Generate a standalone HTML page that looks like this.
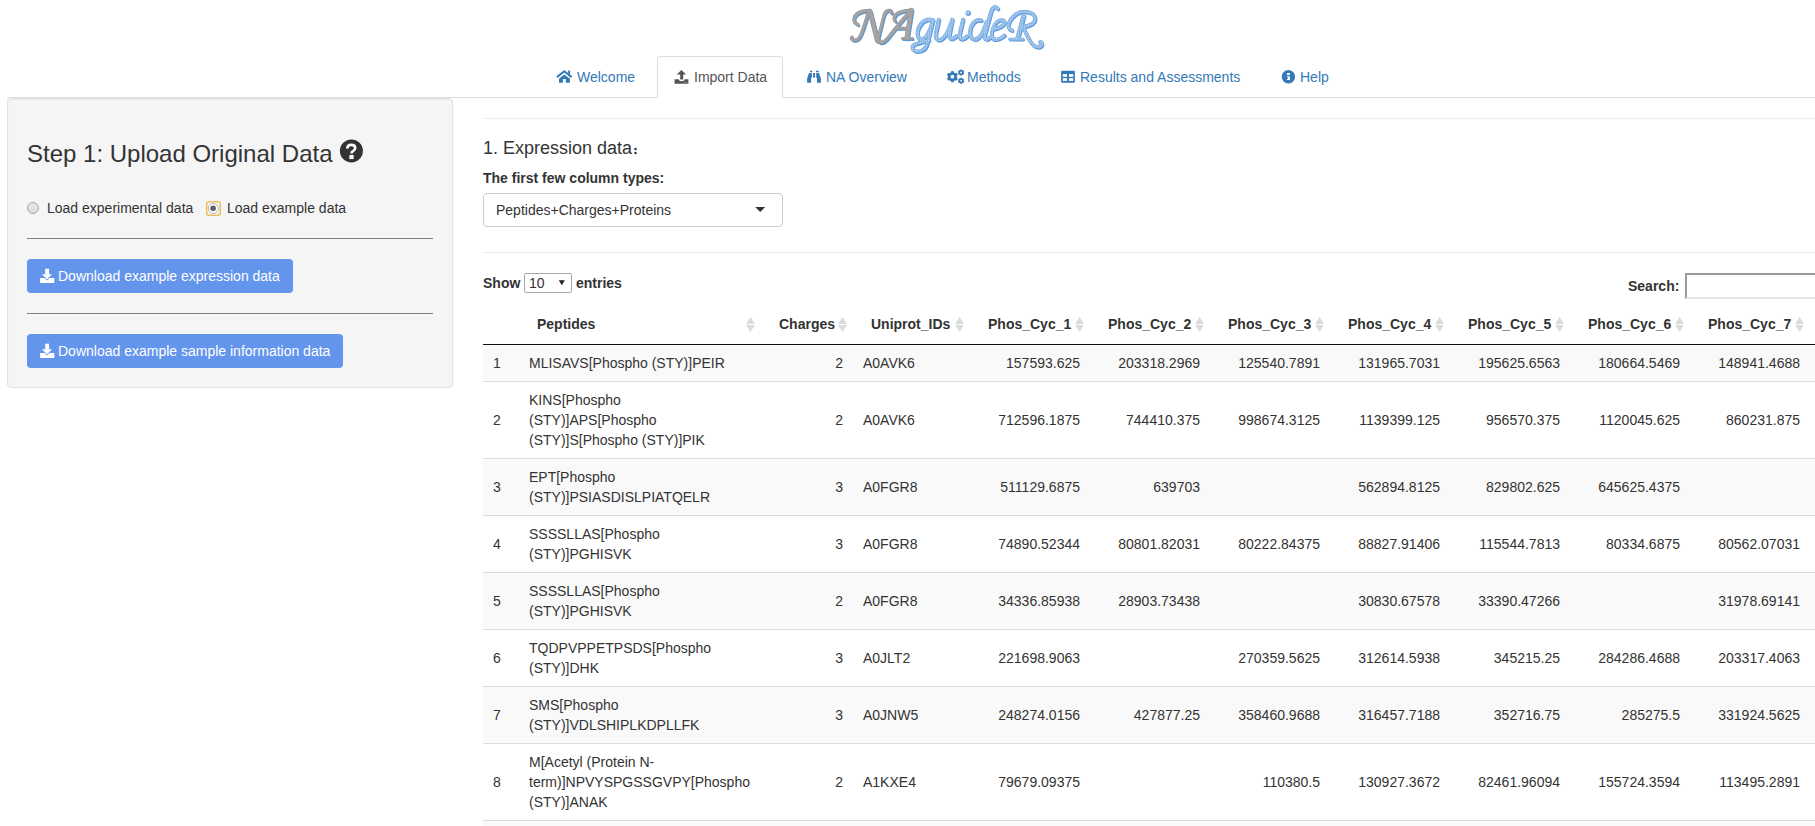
<!DOCTYPE html>
<html><head><meta charset="utf-8">
<style>
*{box-sizing:border-box;}
html,body{margin:0;padding:0;}
body{width:1815px;height:826px;overflow:hidden;position:relative;background:#fff;font-family:"Liberation Sans",sans-serif;font-size:14px;line-height:20px;color:#333;}
.a{position:absolute;white-space:nowrap;}
.nav{color:#337ab7;}
.navline{position:absolute;left:7px;top:97px;width:1808px;height:1px;background:#ddd;}
.acttab{position:absolute;left:657px;top:56px;width:126px;height:42px;border:1px solid #ddd;border-bottom:none;border-radius:4px 4px 0 0;background:#fff;}
.well{position:absolute;left:7px;top:98px;width:446px;height:290px;background:#f5f5f5;border:1px solid #e3e3e3;border-radius:4px;box-shadow:inset 0 1px 1px rgba(0,0,0,.05);}
.hr{position:absolute;height:1px;}
.btn{position:absolute;left:27px;height:34px;background:#6495ed;border-radius:4px;color:#fff;}
.sel{position:absolute;left:483px;top:193px;width:300px;height:34px;border:1px solid #ccc;border-radius:4px;background:#fff;}
table{position:absolute;left:483px;top:304px;border-collapse:separate;border-spacing:0;table-layout:fixed;width:1440px;}
th{font-weight:bold;text-align:left;padding:10px 18px;border-bottom:1px solid #111;height:41px;}
td{padding:8px 10px;border-top:1px solid #ddd;vertical-align:middle;}
tr.o td{background:#f9f9f9;}
tbody tr:first-child td{border-top:none;}
td.r{text-align:right;}
.srt{position:absolute;right:6px;top:17px;width:9px;height:15px;}
</style></head><body>

<!-- logo -->
<svg class="a" style="left:840px;top:0px" width="215" height="56" viewBox="840 0 215 56">
<defs><pattern id="dots" width="2" height="2" patternUnits="userSpaceOnUse"><rect width="2" height="2" fill="#90bbe9"/><rect x="0" y="0" width="1" height="1" fill="#b8d3f1"/></pattern></defs>
<g fill="none" stroke-linecap="round" stroke-linejoin="round">
<path d="M857.9 24.6 C855 23.5 853.6 21 854.2 18 C855 14.5 858.5 12.3 863 11.2 C865.5 10.6 868 10.6 869.6 10.9" stroke="#5b9bd8" stroke-width="2.85" transform="translate(1,1.3)"/>
<path d="M869.8 11 L877.4 40.5" stroke="#5b9bd8" stroke-width="4.40" transform="translate(1,1.3)"/>
<path d="M867.8 14 C865.5 22 862.5 32 860 36.5 C858 40 854.5 41 852.3 39.6 C851 38.8 851.2 37.6 852 37.3" stroke="#5b9bd8" stroke-width="2.75" transform="translate(1,1.3)"/>
<path d="M877.6 40.8 L883.6 16.5 C884.6 12.5 887 10.2 889.5 10.4 C891.3 10.6 892.2 12 891.6 13.2" stroke="#5b9bd8" stroke-width="2.60" transform="translate(1,1.3)"/>
<path d="M895.3 21.2 C893.5 20.2 893.6 16.5 896.2 14.2 C899.5 11.6 905 10.6 911.4 10.1" stroke="#5b9bd8" stroke-width="2.75" transform="translate(1,1.3)"/>
<path d="M911.4 10.1 L906.8 38" stroke="#5b9bd8" stroke-width="4.20" transform="translate(1,1.3)"/>
<path d="M902.4 38.6 H912.6" stroke="#5b9bd8" stroke-width="2.25" transform="translate(1,1.3)"/>
<path d="M909.6 12.3 C902 20 895 29 889.5 36 C886 40.5 883 43 880.5 42.6 C879.3 42.4 879.5 41.3 880.3 41" stroke="#5b9bd8" stroke-width="2.85" transform="translate(1,1.3)"/>
<path d="M895.8 28.2 H908.3" stroke="#5b9bd8" stroke-width="2.25" transform="translate(1,1.3)"/>
<path d="M857.9 24.6 C855 23.5 853.6 21 854.2 18 C855 14.5 858.5 12.3 863 11.2 C865.5 10.6 868 10.6 869.6 10.9" stroke="#8f8f8f" stroke-width="3.35"/>
<path d="M869.8 11 L877.4 40.5" stroke="#8f8f8f" stroke-width="4.90"/>
<path d="M867.8 14 C865.5 22 862.5 32 860 36.5 C858 40 854.5 41 852.3 39.6 C851 38.8 851.2 37.6 852 37.3" stroke="#8f8f8f" stroke-width="3.25"/>
<path d="M877.6 40.8 L883.6 16.5 C884.6 12.5 887 10.2 889.5 10.4 C891.3 10.6 892.2 12 891.6 13.2" stroke="#8f8f8f" stroke-width="3.10"/>
<path d="M895.3 21.2 C893.5 20.2 893.6 16.5 896.2 14.2 C899.5 11.6 905 10.6 911.4 10.1" stroke="#8f8f8f" stroke-width="3.25"/>
<path d="M911.4 10.1 L906.8 38" stroke="#8f8f8f" stroke-width="4.70"/>
<path d="M902.4 38.6 H912.6" stroke="#8f8f8f" stroke-width="2.75"/>
<path d="M909.6 12.3 C902 20 895 29 889.5 36 C886 40.5 883 43 880.5 42.6 C879.3 42.4 879.5 41.3 880.3 41" stroke="#8f8f8f" stroke-width="3.35"/>
<path d="M895.8 28.2 H908.3" stroke="#8f8f8f" stroke-width="2.75"/>
<path d="M857.9 24.6 C855 23.5 853.6 21 854.2 18 C855 14.5 858.5 12.3 863 11.2 C865.5 10.6 868 10.6 869.6 10.9" stroke="#a4a4a4" stroke-width="2.55"/>
<path d="M869.8 11 L877.4 40.5" stroke="#a4a4a4" stroke-width="4.10"/>
<path d="M867.8 14 C865.5 22 862.5 32 860 36.5 C858 40 854.5 41 852.3 39.6 C851 38.8 851.2 37.6 852 37.3" stroke="#a4a4a4" stroke-width="2.45"/>
<path d="M877.6 40.8 L883.6 16.5 C884.6 12.5 887 10.2 889.5 10.4 C891.3 10.6 892.2 12 891.6 13.2" stroke="#a4a4a4" stroke-width="2.30"/>
<path d="M895.3 21.2 C893.5 20.2 893.6 16.5 896.2 14.2 C899.5 11.6 905 10.6 911.4 10.1" stroke="#a4a4a4" stroke-width="2.45"/>
<path d="M911.4 10.1 L906.8 38" stroke="#a4a4a4" stroke-width="3.90"/>
<path d="M902.4 38.6 H912.6" stroke="#a4a4a4" stroke-width="1.95"/>
<path d="M909.6 12.3 C902 20 895 29 889.5 36 C886 40.5 883 43 880.5 42.6 C879.3 42.4 879.5 41.3 880.3 41" stroke="#a4a4a4" stroke-width="2.55"/>
<path d="M895.8 28.2 H908.3" stroke="#a4a4a4" stroke-width="1.95"/>
<path d="M933 20.2 C928.5 18.3 921.5 20 918.3 28.5 C916.3 34.5 918 39.3 921.5 39.3 C926 39.2 930.5 30 933 20.2" stroke="#5e9bdb" stroke-width="3.70" transform="translate(0.7,1)"/>
<path d="M933 20.2 L927.3 43.5 C925.6 49.8 920.5 52.3 915.6 51 C911.5 49.8 911.2 46.2 914.8 44.3 C918.5 42.5 924 41.5 929 40.3" stroke="#5e9bdb" stroke-width="3.40" transform="translate(0.7,1)"/>
<path d="M938.8 19.5 L935.8 33.5 C934.8 38.8 937.8 40.8 941.2 39.3 C945.2 37.3 949.2 29.5 952.3 19.5 L949.6 33.5 C948.6 38.6 951.5 40.5 956.2 36" stroke="#5e9bdb" stroke-width="3.70" transform="translate(0.7,1)"/>
<path d="M963 19.6 L959.6 34 C958.6 39 961.8 40.8 966.8 36.3" stroke="#5e9bdb" stroke-width="3.70" transform="translate(0.7,1)"/>
<path d="M981.2 20.3 C975.5 18.3 970.8 24 970 31 C969.5 36.5 971.8 39.5 975 39.3 C979.3 39 983.5 31.5 986.5 22" stroke="#5e9bdb" stroke-width="3.60" transform="translate(0.7,1)"/>
<path d="M997.8 8.6 C996 5.8 992.8 6.2 991 11.5 L984.8 34.5 C983.8 39.2 986.2 40.9 990.3 37.2" stroke="#5e9bdb" stroke-width="3.70" transform="translate(0.7,1)"/>
<path d="M994 29 C997.5 28.4 1003.6 26 1004.4 22.6 C1005 19.8 1000.8 18.8 997.5 21.3 C993.3 24.6 990.8 31.5 992 36.5 C993 40.8 998.5 40.4 1004.6 35.3" stroke="#5e9bdb" stroke-width="3.30" transform="translate(0.7,1)"/>
<path d="M1012 30.3 C1008.8 29.5 1007.6 26.5 1008.8 23.2 C1011 16.5 1017.5 11.6 1024 11.5 C1030.5 11.4 1035 14 1035 18.5 C1035 23 1030 26.2 1022.5 26.6" stroke="#5e9bdb" stroke-width="3.50" transform="translate(0.7,1)"/>
<path d="M1023.6 15.6 L1017.6 38.3" stroke="#5e9bdb" stroke-width="4.30" transform="translate(0.7,1)"/>
<path d="M1009.8 39.2 H1022.8" stroke="#5e9bdb" stroke-width="2.80" transform="translate(0.7,1)"/>
<path d="M1022.5 26.6 C1025.5 30.5 1028 40 1033 44.8 C1036 47.8 1040.8 47.5 1041.8 44.6 C1042.3 42.8 1041 41.6 1040 42.1" stroke="#5e9bdb" stroke-width="3.50" transform="translate(0.7,1)"/>
<path d="M933 20.2 C928.5 18.3 921.5 20 918.3 28.5 C916.3 34.5 918 39.3 921.5 39.3 C926 39.2 930.5 30 933 20.2" stroke="#6ea6e0" stroke-width="3.80"/>
<path d="M933 20.2 L927.3 43.5 C925.6 49.8 920.5 52.3 915.6 51 C911.5 49.8 911.2 46.2 914.8 44.3 C918.5 42.5 924 41.5 929 40.3" stroke="#6ea6e0" stroke-width="3.50"/>
<path d="M938.8 19.5 L935.8 33.5 C934.8 38.8 937.8 40.8 941.2 39.3 C945.2 37.3 949.2 29.5 952.3 19.5 L949.6 33.5 C948.6 38.6 951.5 40.5 956.2 36" stroke="#6ea6e0" stroke-width="3.80"/>
<path d="M963 19.6 L959.6 34 C958.6 39 961.8 40.8 966.8 36.3" stroke="#6ea6e0" stroke-width="3.80"/>
<path d="M981.2 20.3 C975.5 18.3 970.8 24 970 31 C969.5 36.5 971.8 39.5 975 39.3 C979.3 39 983.5 31.5 986.5 22" stroke="#6ea6e0" stroke-width="3.70"/>
<path d="M997.8 8.6 C996 5.8 992.8 6.2 991 11.5 L984.8 34.5 C983.8 39.2 986.2 40.9 990.3 37.2" stroke="#6ea6e0" stroke-width="3.80"/>
<path d="M994 29 C997.5 28.4 1003.6 26 1004.4 22.6 C1005 19.8 1000.8 18.8 997.5 21.3 C993.3 24.6 990.8 31.5 992 36.5 C993 40.8 998.5 40.4 1004.6 35.3" stroke="#6ea6e0" stroke-width="3.40"/>
<path d="M1012 30.3 C1008.8 29.5 1007.6 26.5 1008.8 23.2 C1011 16.5 1017.5 11.6 1024 11.5 C1030.5 11.4 1035 14 1035 18.5 C1035 23 1030 26.2 1022.5 26.6" stroke="#6ea6e0" stroke-width="3.60"/>
<path d="M1023.6 15.6 L1017.6 38.3" stroke="#6ea6e0" stroke-width="4.40"/>
<path d="M1009.8 39.2 H1022.8" stroke="#6ea6e0" stroke-width="2.90"/>
<path d="M1022.5 26.6 C1025.5 30.5 1028 40 1033 44.8 C1036 47.8 1040.8 47.5 1041.8 44.6 C1042.3 42.8 1041 41.6 1040 42.1" stroke="#6ea6e0" stroke-width="3.60"/>
<path d="M933 20.2 C928.5 18.3 921.5 20 918.3 28.5 C916.3 34.5 918 39.3 921.5 39.3 C926 39.2 930.5 30 933 20.2" stroke="url(#dots)" stroke-width="2.90"/>
<path d="M933 20.2 L927.3 43.5 C925.6 49.8 920.5 52.3 915.6 51 C911.5 49.8 911.2 46.2 914.8 44.3 C918.5 42.5 924 41.5 929 40.3" stroke="url(#dots)" stroke-width="2.60"/>
<path d="M938.8 19.5 L935.8 33.5 C934.8 38.8 937.8 40.8 941.2 39.3 C945.2 37.3 949.2 29.5 952.3 19.5 L949.6 33.5 C948.6 38.6 951.5 40.5 956.2 36" stroke="url(#dots)" stroke-width="2.90"/>
<path d="M963 19.6 L959.6 34 C958.6 39 961.8 40.8 966.8 36.3" stroke="url(#dots)" stroke-width="2.90"/>
<path d="M981.2 20.3 C975.5 18.3 970.8 24 970 31 C969.5 36.5 971.8 39.5 975 39.3 C979.3 39 983.5 31.5 986.5 22" stroke="url(#dots)" stroke-width="2.80"/>
<path d="M997.8 8.6 C996 5.8 992.8 6.2 991 11.5 L984.8 34.5 C983.8 39.2 986.2 40.9 990.3 37.2" stroke="url(#dots)" stroke-width="2.90"/>
<path d="M994 29 C997.5 28.4 1003.6 26 1004.4 22.6 C1005 19.8 1000.8 18.8 997.5 21.3 C993.3 24.6 990.8 31.5 992 36.5 C993 40.8 998.5 40.4 1004.6 35.3" stroke="url(#dots)" stroke-width="2.50"/>
<path d="M1012 30.3 C1008.8 29.5 1007.6 26.5 1008.8 23.2 C1011 16.5 1017.5 11.6 1024 11.5 C1030.5 11.4 1035 14 1035 18.5 C1035 23 1030 26.2 1022.5 26.6" stroke="url(#dots)" stroke-width="2.70"/>
<path d="M1023.6 15.6 L1017.6 38.3" stroke="url(#dots)" stroke-width="3.50"/>
<path d="M1009.8 39.2 H1022.8" stroke="url(#dots)" stroke-width="2.00"/>
<path d="M1022.5 26.6 C1025.5 30.5 1028 40 1033 44.8 C1036 47.8 1040.8 47.5 1041.8 44.6 C1042.3 42.8 1041 41.6 1040 42.1" stroke="url(#dots)" stroke-width="2.70"/>
<circle cx="968.3" cy="13.2" r="2.7" fill="#5e9bdb"/><circle cx="967.8" cy="12.5" r="2.2" fill="url(#dots)"/>
</g></svg>
<!-- nav -->
<div class="navline"></div>
<div class="acttab"></div>
<div class="a nav" style="left:577px;top:67px">Welcome</div>
<div class="a" style="left:694px;top:67px;color:#555">Import Data</div>
<div class="a nav" style="left:826px;top:67px">NA Overview</div>
<div class="a nav" style="left:967px;top:67px">Methods</div>
<div class="a nav" style="left:1080px;top:67px">Results and Assessments</div>
<div class="a nav" style="left:1300px;top:67px">Help</div>
<!-- nav icons -->
<svg class="a" style="left:552px;top:66px" width="24" height="20" viewBox="0 0 24 20" fill="#337ab7">
 <polyline points="4.9,11.1 12.3,5.2 19.6,11.1" fill="none" stroke="#337ab7" stroke-width="2"/>
 <rect x="16.2" y="4.5" width="1.9" height="4.2"/>
 <path d="M7 12.8 L12.3 8.6 L17.9 12.8 V16.8 H13.8 V12.9 H10.9 V16.8 H7 Z"/>
</svg>
<svg class="a" style="left:670px;top:66px" width="24" height="20" viewBox="0 0 24 20" fill="#555">
 <path d="M6.8 8.5 L11.4 4.1 L16 8.5 H13.2 V13.6 H10.2 V8.5 Z"/>
 <path d="M4.6 13.2 H8.6 Q9 15.2 11.7 15.2 Q14.4 15.2 14.8 13.2 H18.4 V17.8 H4.6 Z"/>
 <circle cx="14.6" cy="16.3" r="0.45" fill="#ccc"/><circle cx="16.3" cy="16.3" r="0.45" fill="#ccc"/>
</svg>
<svg class="a" style="left:802px;top:66px" width="24" height="20" viewBox="0 0 24 20" fill="#337ab7">
 <rect x="8" y="4.7" width="2.2" height="1.5"/><rect x="14" y="4.7" width="2.7" height="1.5"/>
 <path d="M7 7 H9.9 V11.6 L9.1 12.3 V16.7 H5.1 V12.4 Z"/>
 <rect x="11.1" y="7" width="2" height="4.6"/>
 <path d="M14.2 7 H17 L18.9 12.4 V16.7 H15 V12.3 L14.2 11.6 Z"/>
</svg>
<svg class="a" style="left:942px;top:66px" width="24" height="20" viewBox="0 0 24 20" fill="#337ab7">
 <g transform="translate(10.4,10.7)">
  <circle r="3.2" fill="none" stroke="#337ab7" stroke-width="2.6"/>
  <rect x="-1.3" y="-5.6" width="2.6" height="11.2"/>
  <rect x="-1.3" y="-5.6" width="2.6" height="11.2" transform="rotate(60)"/>
  <rect x="-1.3" y="-5.6" width="2.6" height="11.2" transform="rotate(120)"/>
  <circle r="1.9" fill="#fff"/>
 </g>
 <g transform="translate(19.1,6.5)">
  <circle r="1.9" fill="none" stroke="#337ab7" stroke-width="1.6"/>
  <rect x="-0.8" y="-2.9" width="1.6" height="5.8"/><rect x="-0.8" y="-2.9" width="1.6" height="5.8" transform="rotate(60)"/><rect x="-0.8" y="-2.9" width="1.6" height="5.8" transform="rotate(120)"/>
  <circle r="0.9" fill="#fff"/>
 </g>
 <g transform="translate(19.1,14.8)">
  <circle r="1.9" fill="none" stroke="#337ab7" stroke-width="1.6"/>
  <rect x="-0.8" y="-2.9" width="1.6" height="5.8"/><rect x="-0.8" y="-2.9" width="1.6" height="5.8" transform="rotate(60)"/><rect x="-0.8" y="-2.9" width="1.6" height="5.8" transform="rotate(120)"/>
  <circle r="0.9" fill="#fff"/>
 </g>
</svg>
<svg class="a" style="left:1056px;top:66px" width="24" height="20" viewBox="0 0 24 20" fill="#337ab7">
 <rect x="5.1" y="4.8" width="13.8" height="11.9" rx="1"/>
 <g fill="#fff"><rect x="6.8" y="8.1" width="4.3" height="2.7"/><rect x="13" y="8.1" width="4.3" height="2.7"/><rect x="6.8" y="12.2" width="4.3" height="2.7"/><rect x="13" y="12.2" width="4.3" height="2.7"/></g>
</svg>
<svg class="a" style="left:1276px;top:66px" width="24" height="20" viewBox="0 0 24 20" fill="#337ab7">
 <circle cx="12.4" cy="10.7" r="6.7"/>
 <g fill="#fff"><rect x="10.9" y="7" width="3" height="2"/><path d="M10.9 10.2 H13.9 V13 H14 V14 H10.9 V13 H11.8 V11.2 H10.9 Z"/></g>
</svg>
<!-- well -->
<div class="well"></div>
<div class="a" style="left:27px;top:141px;font-size:24px;line-height:26px;">Step 1: Upload Original Data</div>
<svg class="a" style="left:336px;top:136px" width="30" height="30" viewBox="336 136 30 30">
 <circle cx="351.4" cy="150.9" r="11.5" fill="#333"/>
 <path d="M347.2 148.6 Q347.4 144.9 351.3 144.9 Q355.2 144.9 355.2 147.9 Q355.2 149.8 353.3 150.8 Q351.5 151.7 351.5 153.4" fill="none" stroke="#fff" stroke-width="2.6"/>
 <rect x="349.4" y="155" width="4.2" height="4.1" fill="#fff"/>
</svg>
<svg class="a" style="left:24px;top:199px" width="20" height="20" viewBox="24 199 20 20">
 <defs><linearGradient id="rg" x1="0" y1="0" x2="0" y2="1"><stop offset="0" stop-color="#e8e8e8"/><stop offset="1" stop-color="#dcdcdc"/></linearGradient></defs>
 <circle cx="33" cy="208" r="5.5" fill="url(#rg)" stroke="#a9a9a9" stroke-width="1"/>
</svg>
<svg class="a" style="left:203px;top:198px" width="22" height="22" viewBox="203 198 22 22">
 <rect x="206.7" y="201.7" width="13.6" height="13.6" rx="2.2" fill="none" stroke="#ebbf62" stroke-width="1.5"/>
 <circle cx="213.4" cy="208.4" r="5" fill="#fff" stroke="#b4b4b4" stroke-width="1"/>
 <circle cx="213.1" cy="208.3" r="2.8" fill="#606060"/>
</svg>
<div class="a" style="left:47px;top:198px">Load experimental data</div>
<div class="a" style="left:227px;top:198px">Load example data</div>
<div class="hr" style="left:27px;top:238px;width:406px;background:#808080"></div>
<div class="btn" style="top:259px;width:266px"><svg class="a" style="left:9px;top:5px" width="24" height="24" viewBox="0 0 24 24" fill="#fff"><rect x="9.2" y="4.7" width="3.9" height="5.7"/><path d="M6 10.2 H16 L11.05 15.4 Z"/><path d="M4.1 14.1 H8.6 L11.05 16.6 L13.5 14.1 H18.3 V18.9 H4.1 Z"/></svg><span class="a" style="left:31px;top:7px">Download example expression data</span></div>
<div class="hr" style="left:27px;top:313px;width:406px;background:#808080"></div>
<div class="btn" style="top:334px;width:316px"><svg class="a" style="left:9px;top:5px" width="24" height="24" viewBox="0 0 24 24" fill="#fff"><rect x="9.2" y="4.7" width="3.9" height="5.7"/><path d="M6 10.2 H16 L11.05 15.4 Z"/><path d="M4.1 14.1 H8.6 L11.05 16.6 L13.5 14.1 H18.3 V18.9 H4.1 Z"/></svg><span class="a" style="left:31px;top:7px">Download example sample information data</span></div>

<!-- right -->
<div class="hr" style="left:483px;top:118px;width:1332px;background:#eee"></div>
<div class="a" style="left:483px;top:138px;font-size:18px;line-height:20px">1. Expression data</div>
<svg class="a" style="left:630px;top:144px" width="10" height="14" viewBox="630 144 10 14"><circle cx="635.5" cy="149.1" r="1.25" fill="#333"/><circle cx="635.5" cy="153.1" r="1.25" fill="#333"/></svg>
<div class="a" style="left:483px;top:168px;font-weight:bold">The first few column types:</div>
<div class="sel"><span class="a" style="left:12px;top:6px">Peptides+Charges+Proteins</span><svg class="a" style="left:271px;top:13px" width="12" height="6" viewBox="0 0 12 6"><path d="M0.2 0.1 H10.2 L5.2 5 Z" fill="#333"/></svg></div>
<div class="hr" style="left:483px;top:252px;width:1332px;background:#eee"></div>
<div class="a" style="left:483px;top:273px;font-weight:bold">Show</div>
<div class="a" style="left:576px;top:273px;font-weight:bold">entries</div>
<div class="a" style="left:524px;top:273px;width:48px;height:20px;border:1px solid #a9a9a9;border-radius:2px;background:#fff"></div>
<div class="a" style="left:529px;top:273px;">10</div>
<svg class="a" style="left:558px;top:280px" width="8" height="6" viewBox="0 0 8 6"><path d="M0.8 0.2 H6.8 L3.8 5.2 Z" fill="#222"/></svg>
<div class="a" style="left:1685px;top:273px;width:140px;height:26px;border-style:solid;border-width:2px;border-color:#9a9a9a #e6e6e6 #e6e6e6 #9a9a9a;background:#fff"></div>
<div class="a" style="left:1628px;top:276px;font-weight:bold">Search:</div>

<!-- TABLE -->
<table><colgroup><col style="width:36px"><col style="width:242px"><col style="width:92px"><col style="width:117px"><col style="width:120px"><col style="width:120px"><col style="width:120px"><col style="width:120px"><col style="width:120px"><col style="width:120px"><col style="width:120px"><col style="width:120px"></colgroup>
<thead><tr><th></th><th>Peptides</th><th>Charges</th><th>Uniprot_IDs</th><th>Phos_Cyc_1</th><th>Phos_Cyc_2</th><th>Phos_Cyc_3</th><th>Phos_Cyc_4</th><th>Phos_Cyc_5</th><th>Phos_Cyc_6</th><th>Phos_Cyc_7</th><th>Phos_Cyc_8</th></tr></thead><tbody>
<tr class="o"><td>1</td><td>MLISAVS[Phospho (STY)]PEIR</td><td class="r">2</td><td>A0AVK6</td><td class="r">157593.625</td><td class="r">203318.2969</td><td class="r">125540.7891</td><td class="r">131965.7031</td><td class="r">195625.6563</td><td class="r">180664.5469</td><td class="r">148941.4688</td><td class="r"></td></tr>
<tr><td>2</td><td>KINS[Phospho<br>(STY)]APS[Phospho<br>(STY)]S[Phospho (STY)]PIK</td><td class="r">2</td><td>A0AVK6</td><td class="r">712596.1875</td><td class="r">744410.375</td><td class="r">998674.3125</td><td class="r">1139399.125</td><td class="r">956570.375</td><td class="r">1120045.625</td><td class="r">860231.875</td><td class="r"></td></tr>
<tr class="o"><td>3</td><td>EPT[Phospho<br>(STY)]PSIASDISLPIATQELR</td><td class="r">3</td><td>A0FGR8</td><td class="r">511129.6875</td><td class="r">639703</td><td class="r"></td><td class="r">562894.8125</td><td class="r">829802.625</td><td class="r">645625.4375</td><td class="r"></td><td class="r"></td></tr>
<tr><td>4</td><td>SSSSLLAS[Phospho<br>(STY)]PGHISVK</td><td class="r">3</td><td>A0FGR8</td><td class="r">74890.52344</td><td class="r">80801.82031</td><td class="r">80222.84375</td><td class="r">88827.91406</td><td class="r">115544.7813</td><td class="r">80334.6875</td><td class="r">80562.07031</td><td class="r"></td></tr>
<tr class="o"><td>5</td><td>SSSSLLAS[Phospho<br>(STY)]PGHISVK</td><td class="r">2</td><td>A0FGR8</td><td class="r">34336.85938</td><td class="r">28903.73438</td><td class="r"></td><td class="r">30830.67578</td><td class="r">33390.47266</td><td class="r"></td><td class="r">31978.69141</td><td class="r"></td></tr>
<tr><td>6</td><td>TQDPVPPETPSDS[Phospho<br>(STY)]DHK</td><td class="r">3</td><td>A0JLT2</td><td class="r">221698.9063</td><td class="r"></td><td class="r">270359.5625</td><td class="r">312614.5938</td><td class="r">345215.25</td><td class="r">284286.4688</td><td class="r">203317.4063</td><td class="r"></td></tr>
<tr class="o"><td>7</td><td>SMS[Phospho<br>(STY)]VDLSHIPLKDPLLFK</td><td class="r">3</td><td>A0JNW5</td><td class="r">248274.0156</td><td class="r">427877.25</td><td class="r">358460.9688</td><td class="r">316457.7188</td><td class="r">352716.75</td><td class="r">285275.5</td><td class="r">331924.5625</td><td class="r"></td></tr>
<tr><td>8</td><td>M[Acetyl (Protein N-<br>term)]NPVYSPGSSGVPY[Phospho<br>(STY)]ANAK</td><td class="r">2</td><td>A1KXE4</td><td class="r">79679.09375</td><td class="r"></td><td class="r">110380.5</td><td class="r">130927.3672</td><td class="r">82461.96094</td><td class="r">155724.3594</td><td class="r">113495.2891</td><td class="r"></td></tr>
<tr class="o"><td>9</td><td>ABCDEF[Phospho<br>(STY)]GHIK</td><td class="r">2</td><td>A2A000</td><td class="r">100000.1</td><td class="r"></td><td class="r"></td><td class="r"></td><td class="r"></td><td class="r"></td><td class="r"></td><td class="r"></td></tr>
</tbody></table>
<svg class="a" style="left:746px;top:317px" width="9" height="15" viewBox="0 0 9 15"><path d="M4.5 0L9 7H0Z M0 8H9L4.5 15Z" fill="#dcdcdc"/></svg>
<svg class="a" style="left:838px;top:317px" width="9" height="15" viewBox="0 0 9 15"><path d="M4.5 0L9 7H0Z M0 8H9L4.5 15Z" fill="#dcdcdc"/></svg>
<svg class="a" style="left:955px;top:317px" width="9" height="15" viewBox="0 0 9 15"><path d="M4.5 0L9 7H0Z M0 8H9L4.5 15Z" fill="#dcdcdc"/></svg>
<svg class="a" style="left:1075px;top:317px" width="9" height="15" viewBox="0 0 9 15"><path d="M4.5 0L9 7H0Z M0 8H9L4.5 15Z" fill="#dcdcdc"/></svg>
<svg class="a" style="left:1195px;top:317px" width="9" height="15" viewBox="0 0 9 15"><path d="M4.5 0L9 7H0Z M0 8H9L4.5 15Z" fill="#dcdcdc"/></svg>
<svg class="a" style="left:1315px;top:317px" width="9" height="15" viewBox="0 0 9 15"><path d="M4.5 0L9 7H0Z M0 8H9L4.5 15Z" fill="#dcdcdc"/></svg>
<svg class="a" style="left:1435px;top:317px" width="9" height="15" viewBox="0 0 9 15"><path d="M4.5 0L9 7H0Z M0 8H9L4.5 15Z" fill="#dcdcdc"/></svg>
<svg class="a" style="left:1555px;top:317px" width="9" height="15" viewBox="0 0 9 15"><path d="M4.5 0L9 7H0Z M0 8H9L4.5 15Z" fill="#dcdcdc"/></svg>
<svg class="a" style="left:1675px;top:317px" width="9" height="15" viewBox="0 0 9 15"><path d="M4.5 0L9 7H0Z M0 8H9L4.5 15Z" fill="#dcdcdc"/></svg>
<svg class="a" style="left:1795px;top:317px" width="9" height="15" viewBox="0 0 9 15"><path d="M4.5 0L9 7H0Z M0 8H9L4.5 15Z" fill="#dcdcdc"/></svg>
<svg class="a" style="left:1915px;top:317px" width="9" height="15" viewBox="0 0 9 15"><path d="M4.5 0L9 7H0Z M0 8H9L4.5 15Z" fill="#dcdcdc"/></svg>

<!-- /TABLE -->
</body></html>
